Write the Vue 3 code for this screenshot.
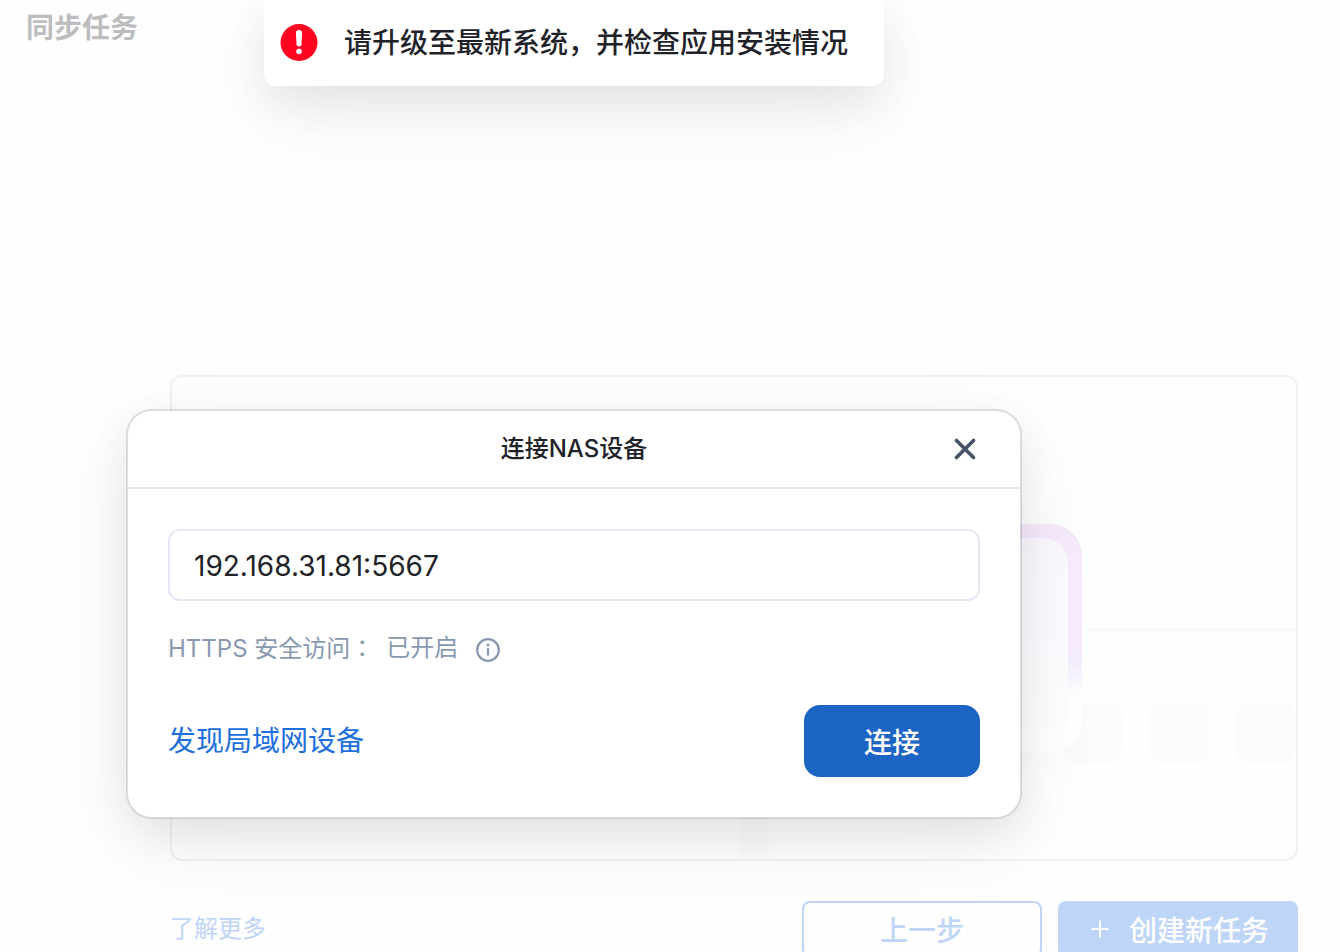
<script setup>
import { ref } from 'vue'

const address = ref('192.168.31.81:5667')
const tiles = [975, 1062, 1149, 1236]
</script>

<template>
  <div class="page">
    <div class="backdrop-content">
      <h1 class="page-title">同步任务</h1>
      <main class="workspace">
        <section class="panel">
          <svg class="illustration" viewBox="740 377 556 482" aria-hidden="true">
            <defs>
              <linearGradient id="frame" x1="0" y1="525" x2="0" y2="751" gradientUnits="userSpaceOnUse">
                <stop offset="0" stop-color="#f4eafc" />
                <stop offset="0.25" stop-color="#f8ebfe" />
                <stop offset="0.5" stop-color="#f7ebfd" />
                <stop offset="0.6" stop-color="#f3edfd" />
                <stop offset="0.76" stop-color="#ffffff" />
              </linearGradient>
              <linearGradient id="screen" x1="0" y1="525" x2="0" y2="751" gradientUnits="userSpaceOnUse">
                <stop offset="0" stop-color="#faf8fe" />
                <stop offset="0.8" stop-color="#fdfdff" />
                <stop offset="1" stop-color="#ffffff" />
              </linearGradient>
            </defs>
            <rect x="740" y="790" width="29" height="68" fill="#fafcfb" />
            <rect x="1084" y="628" width="212" height="2" fill="#f8f9f9" />
            <rect x="1084" y="630" width="212" height="24" fill="#fcfdfd" />
            <rect v-for="x in tiles" :key="x" :x="x" y="703" width="60" height="60" rx="14" fill="#fafcfb" />
            <rect x="860" y="524" width="222" height="227" rx="32" fill="url(#frame)" />
            <path d="M860 538H1040Q1068 538 1068 566V733H860Z" fill="url(#screen)" />
          </svg>
        </section>
        <footer class="footer">
          <a class="more" href="#">了解更多</a>
          <button class="step back" type="button">上一步</button>
          <button class="step create" type="button">
            <svg width="18" height="18" viewBox="0 0 18 18" aria-hidden="true">
              <path d="M9 .5v17M.5 9h17" stroke="currentColor" stroke-width="2" />
            </svg>
            创建新任务
          </button>
        </footer>
      </main>
    </div>

    <div class="dialog" role="dialog" aria-labelledby="dialog-title">
      <header class="dialog-head">
        <h2 id="dialog-title">连接NAS设备</h2>
        <button class="close" type="button" aria-label="关闭">
          <svg width="24" height="24" viewBox="0 0 24 24" aria-hidden="true">
            <path d="M3.5 3.5l17 17M20.5 3.5l-17 17" stroke="currentColor" stroke-width="3.7" stroke-linecap="round" />
          </svg>
        </button>
      </header>
      <div class="dialog-body">
        <input v-model="address" class="address" type="text" aria-label="设备地址" />
        <div class="https">
          <span>HTTPS 安全访问<span class="colon">：</span></span>
          <span class="state">已开启</span>
          <button class="info" type="button" aria-label="说明">
            <svg width="24" height="24" viewBox="0 0 24 24" fill="none" aria-hidden="true">
              <circle cx="12" cy="12" r="10.8" stroke="currentColor" stroke-width="2.2" />
              <circle cx="12" cy="7" r="1.4" fill="currentColor" />
              <path d="M12 10v7.5" stroke="currentColor" stroke-width="2.2" />
            </svg>
          </button>
        </div>
        <div class="actions">
          <a class="discover" href="#">发现局域网设备</a>
          <button class="connect" type="button">连接</button>
        </div>
      </div>
    </div>

    <div class="toast" role="alert">
      <svg width="38" height="38" viewBox="0 0 38 38" aria-hidden="true">
        <circle cx="19" cy="18.5" r="18.5" fill="#ff0520" />
        <path d="M15.9 9a3.1 3.1 0 0 1 6.2 0l-.6 11a2.5 2.5 0 0 1-5 0z" fill="#fff" />
        <circle cx="19" cy="27.5" r="2.8" fill="#fff" />
      </svg>
      <span>请升级至最新系统，并检查应用安装情况</span>
    </div>
  </div>
</template>

<style>
body {
  margin: 0;
  background: #fefefe;
}
</style>

<style scoped>
.page {
  position: relative;
  height: 100vh;
  overflow: hidden;
  box-sizing: border-box;
  font-family: Inter, "Noto Sans CJK SC", sans-serif;
  color: #1f2329;
}
button,
input {
  font-family: inherit;
  box-sizing: border-box;
}
button {
  padding: 0;
  border: 0;
  background: none;
  cursor: pointer;
}
a {
  text-decoration: none;
}
svg {
  display: block;
  flex: none;
}
.page-title {
  margin: 0;
  padding: 8px 26px 0;
  font-size: 28px;
  line-height: 40px;
  font-weight: 600;
  color: #bcbdbe;
}
.workspace {
  padding: 327px 42px 0 170px;
}
.panel {
  display: flex;
  justify-content: flex-end;
  height: 482px;
  border: 2px solid #eef2f6;
  border-radius: 12px;
  overflow: hidden;
}
.illustration {
  width: 556px;
  height: 482px;
}
.footer {
  display: flex;
  align-items: flex-start;
  gap: 16px;
  padding-top: 40px;
}
.more {
  margin-right: auto;
  font-size: 24px;
  line-height: 56px;
  color: #bfd5f7;
}
.step {
  display: flex;
  align-items: center;
  justify-content: center;
  width: 240px;
  height: 56px;
  border-radius: 8px;
  font-size: 28px;
  font-weight: 500;
}
.back {
  border: 2px solid #bfd5f7;
  background: #fefefe;
  color: #bfd5f7;
}
.create {
  gap: 20px;
  padding-left: 4px;
  background: #bfd5f7;
  color: #fff;
}
.dialog {
  position: absolute;
  top: 409px;
  left: 126px;
  right: 318px;
  border: 2px solid rgba(0, 0, 0, 0.12);
  border-radius: 26px;
  background: #fff;
  background-clip: padding-box;
  box-shadow: 0 16px 40px rgba(0, 0, 0, 0.07), 0 24px 88px rgba(0, 0, 0, 0.06);
}
.dialog-head {
  position: relative;
  display: flex;
  align-items: center;
  justify-content: center;
  height: 76px;
  border-bottom: 2px solid #e4e9f3;
}
.dialog-head h2 {
  margin: 0;
  font-size: 24px;
  line-height: 32px;
  font-weight: 500;
}
.close {
  position: absolute;
  right: 43px;
  color: #475467;
}
.dialog-body {
  padding: 40px;
}
.address {
  display: block;
  width: 100%;
  height: 72px;
  padding: 2px 24px 0;
  border: 2px solid #e4e9f3;
  border-radius: 12px;
  background: #fff;
  color: #1f2329;
  font-size: 28px;
  outline: none;
}
.https {
  display: flex;
  align-items: center;
  height: 32px;
  margin-top: 33px;
  font-size: 24px;
  line-height: 32px;
  color: #8898b0;
}
.https > span {
  padding-bottom: 4px;
}
.colon {
  font-family: "Noto Sans CJK TC", sans-serif;
}
.info {
  margin-left: 18px;
  color: #8898b0;
}
.state {
  margin-left: 12px;
}
.actions {
  display: flex;
  align-items: center;
  justify-content: space-between;
  margin-top: 39px;
}
.discover {
  padding-bottom: 4px;
  font-size: 28px;
  color: #1d6fe0;
}
.connect {
  width: 176px;
  height: 72px;
  border-radius: 16px;
  background: #1d65c4;
  color: #fff;
  font-size: 28px;
  font-weight: 500;
}
.toast {
  position: absolute;
  top: 0;
  left: 264px;
  display: flex;
  align-items: center;
  gap: 26px;
  box-sizing: border-box;
  width: 620px;
  height: 86px;
  padding: 0 16px;
  border-radius: 0 0 12px 12px;
  background: #fff;
  box-shadow: 0 16px 40px rgba(0, 0, 0, 0.07), 0 24px 88px rgba(0, 0, 0, 0.06);
  font-size: 28px;
  line-height: 40px;
  font-weight: 500;
}
</style>
